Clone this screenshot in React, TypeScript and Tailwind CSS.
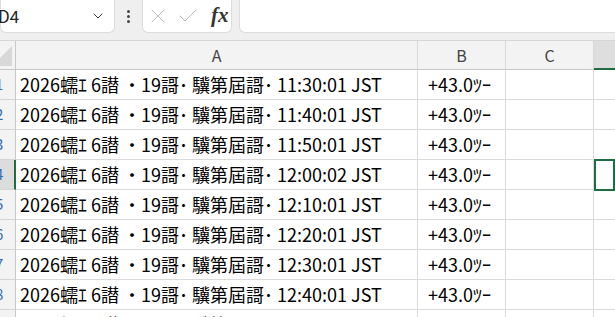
import { ChevronDown, X, Check } from 'lucide-react';

const rows = [
  '11:30:01',
  '11:40:01',
  '11:50:01',
  '12:00:02',
  '12:10:01',
  '12:20:01',
  '12:30:01',
  '12:40:01',
  '12:50:01',
];

const cellFont = { fontFamily: '"Noto Sans CJK JP", "Noto Sans", sans-serif' };

function RowHeader({ n, active }: { n: number; active: boolean }) {
  return (
    <div
      className={`h-[30px] overflow-hidden border-b border-b-[#d4d4d4] flex items-center justify-start ${
        active ? 'bg-[#dcdcdc] border-r-2 border-r-[#1e6e42]' : 'bg-[#f3f3f3] border-r border-r-[#c8c8c8]'
      }`}
    >
      <span className="ml-[-5px] text-[15px] text-[#2f6db5]" style={cellFont}>
        {n}
      </span>
    </div>
  );
}

export default function App() {
  return (
    <div className="w-[615px] h-[317px] overflow-hidden bg-white select-none" style={{ fontFamily: '"Liberation Sans", sans-serif' }}>
      {/* formula bar */}
      <div className="flex h-[41px] bg-[#efefef] border-b border-[#d6d6d6]">
        <div className="flex items-center justify-between w-[115px] h-[33px] bg-white rounded-b-md border border-t-0 border-[#dcdcdc] pr-2">
          <span className="ml-[-3px] text-[17px] text-[#222]" style={cellFont}>D4</span>
          <ChevronDown className="w-4 h-4 text-[#333]" strokeWidth={1.5} />
        </div>
        <div className="flex flex-col justify-center gap-[2px] w-[27px] items-center h-[33px]">
          <span className="w-[3px] h-[3px] bg-[#444] rounded-full" />
          <span className="w-[3px] h-[3px] bg-[#444] rounded-full" />
          <span className="w-[3px] h-[3px] bg-[#444] rounded-full" />
        </div>
        <div className="flex items-center w-[90px] h-[33px] bg-white rounded-b-md border border-t-0 border-[#dcdcdc] pl-[3px] gap-[6px]">
          <X className="w-[24px] h-[24px] text-[#bdbdbd]" strokeWidth={1} />
          <Check className="w-[24px] h-[24px] text-[#bdbdbd]" strokeWidth={1} />
          <span className="ml-[5px] text-[21px] italic font-bold text-[#333]" style={{ fontFamily: '"Liberation Serif", serif' }}>
            fx
          </span>
        </div>
        <div className="ml-[7px] flex-1 h-[33px] bg-white rounded-bl-md border border-t-0 border-r-0 border-[#dcdcdc]" />
      </div>

      {/* grid */}
      <div className="grid grid-cols-[16px_402px_88px_88px_1fr]">
        {/* header row */}
        <div className="h-[29px] bg-[#f3f3f3] border-b border-r border-[#c8c8c8] relative overflow-hidden">
          <div className="absolute right-[3px] bottom-[3px] w-0 h-0 border-l-[20px] border-l-transparent border-b-[20px] border-b-[#d8d8d8]" />
        </div>
        {['A', 'B', 'C'].map((c) => (
          <div
            key={c}
            className="h-[29px] bg-[#f3f3f3] border-b border-r border-b-[#c8c8c8] border-r-[#d8d8d8] flex items-center justify-center text-[16px] text-[#444]"
            style={cellFont}
          >
            {c}
          </div>
        ))}
        <div className="h-[29px] bg-[#dedede] border-b-2 border-b-[#1e6e42]" />

        {rows.map((t, i) => {
          const active = i === 3;
          return (
            <div key={t} className="contents">
              <RowHeader n={i + 1} active={active} />
              <div
                className="h-[30px] border-b border-r border-[#dadada] flex items-center pl-[4px] text-[18px] text-black whitespace-nowrap overflow-hidden"
                style={cellFont}
              >
                2026蠕ｴ 6譛 ・19謌･ 驥第屆謌･ {t} JST
              </div>
              <div
                className="h-[30px] border-b border-r border-[#dadada] flex items-center pl-[10px] text-[18px] text-black whitespace-nowrap"
                style={cellFont}
              >
                +43.0ﾂｰ
              </div>
              <div className="h-[30px] border-b border-r border-[#dadada]" />
              {active ? (
                <div className="h-[32px] -my-px border-2 border-[#1e6e42] relative z-10" />
              ) : (
                <div className="h-[30px] border-b border-[#dadada]" />
              )}
            </div>
          );
        })}
      </div>
    </div>
  );
}
